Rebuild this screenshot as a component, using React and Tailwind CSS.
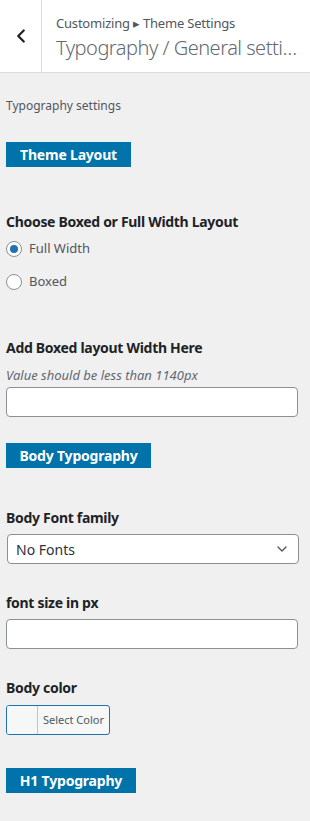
import { ChevronLeft, ChevronDown } from "lucide-react";

function SectionButton({ label, width }) {
  return (
    <div className={`h-[25px] bg-[#0073aa] text-white font-bold text-[14px] tracking-[-0.2px] flex items-center justify-center ${width}`}>
      {label}
    </div>
  );
}

function Label({ children, className = "" }) {
  return <p className={`text-[14px] font-bold text-[#1d2327] leading-[20px] tracking-[-0.3px] ${className}`}>{children}</p>;
}

function Radio({ checked, label }) {
  return (
    <label className="flex items-center gap-[7px] h-[20px]">
      <span className="w-[16px] h-[16px] rounded-full border border-[#8c8f94] bg-white flex items-center justify-center">
        {checked ? <span className="w-[8px] h-[8px] rounded-full bg-[#2271b1]" /> : null}
      </span>
      <span className="text-[13px] text-[#50575e]">{label}</span>
    </label>
  );
}

export default function App() {
  return (
    <div className="w-[310px] min-h-[821px] bg-[#f0f0f1] font-['Noto_Sans',sans-serif]">
      <div className="h-[73px] bg-white border-b border-[#dcdcde] flex">
        <div className="w-[42px] border-r border-[#dcdcde] flex items-center justify-center">
          <ChevronLeft size={22} strokeWidth={2.5} className="text-[#1d2327]" />
        </div>
        <div className="flex-1 min-w-0 pl-[14px] pr-[8px] pt-[14px]">
          <p className="text-[13px] text-[#50575e] leading-[18px] tracking-[-0.2px]">Customizing ▸ Theme Settings</p>
          <p className="mt-[1px] text-[20px] font-light text-[#646970] leading-[30px] tracking-[-0.5px] truncate">Typography / General settings</p>
        </div>
      </div>

      <div className="px-[6px] pt-[24px]">
        <p className="text-[12px] text-[#50575e] leading-[18px]">Typography settings</p>

        <div className="mt-[27px]">
          <SectionButton label="Theme Layout" width="w-[125px]" />
        </div>

        <Label className="mt-[45px]">Choose Boxed or Full Width Layout</Label>
        <div className="mt-[7px] flex flex-col gap-[13px]">
          <Radio checked label="Full Width" />
          <Radio label="Boxed" />
        </div>

        <Label className="mt-[46px]">Add Boxed layout Width Here</Label>
        <p className="text-[13px] italic text-[#646970] leading-[18px] mt-[8px]">Value should be less than 1140px</p>
        <input className="mt-[3px] w-[292px] h-[30px] bg-white border border-[#8c8f94] rounded-[4px] block" />

        <div className="mt-[26px]">
          <SectionButton label="Body Typography" width="w-[145px]" />
        </div>

        <Label className="mt-[40px]">Body Font family</Label>
        <div className="mt-[6px] ml-[1px] w-[292px] h-[30px] bg-white border border-[#8c8f94] rounded-[4px] flex items-center justify-between pl-[8px] pr-[8px]">
          <span className="text-[14px] text-[#2c3338]">No Fonts</span>
          <ChevronDown size={16} strokeWidth={2} className="text-[#50575e]" />
        </div>

        <Label className="mt-[29px]">font size in px</Label>
        <input className="mt-[6px] w-[292px] h-[30px] bg-white border border-[#8c8f94] rounded-[4px] block" />

        <Label className="mt-[29px]">Body color</Label>
        <div className="mt-[7px] w-[104px] h-[30px] border border-[#2271b1] rounded-[3px] bg-[#f6f7f7] flex overflow-hidden">
          <span className="w-[31px] h-full border-r border-[#c3c4c7] bg-[#f6f7f7]" />
          <span className="flex-1 flex items-center justify-center text-[11px] text-[#50575e]">Select Color</span>
        </div>

        <div className="mt-[33px]">
          <SectionButton label="H1 Typography" width="w-[130px]" />
        </div>
      </div>
    </div>
  );
}
